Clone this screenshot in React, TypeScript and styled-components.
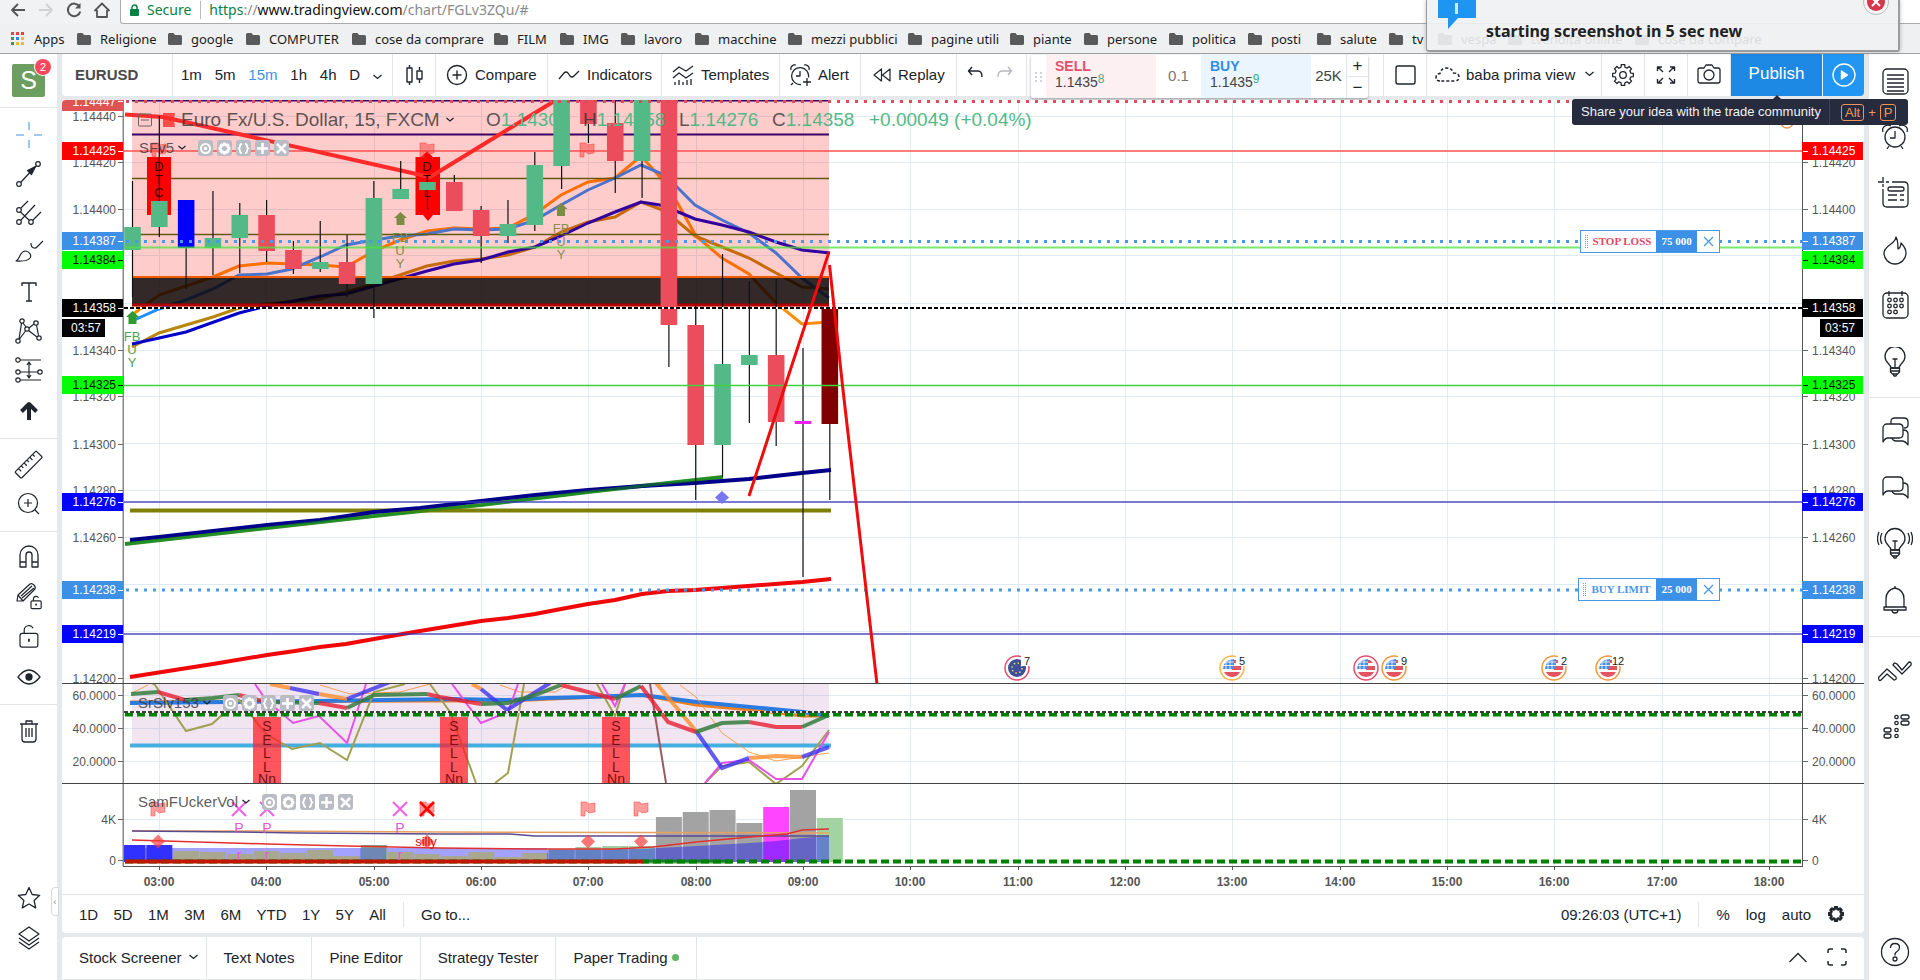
import React from "react";
import styled, { createGlobalStyle, css } from "styled-components";

const SANS = '"Liberation Sans", Arial, sans-serif';
const UI = '"Noto Sans", "Open Sans", sans-serif';
const LINE = "#e1e5ea";
const GAP = "#e6e9ec";

const GlobalStyle = createGlobalStyle`
  *, *::before, *::after { box-sizing: border-box; }
  body { margin: 0; background: ${GAP}; font-family: ${SANS}; color: #20242c; }
  button, input { font: inherit; color: inherit; background: none; border: 0; padding: 0; margin: 0; }
  a { color: inherit; text-decoration: none; }
`;

/* ---------- browser frame ---------- */

const Page = styled.div`
  display: flex;
  flex-direction: column;
  min-height: 100vh;
  position: relative;
  overflow: hidden;
`;
const NavBar = styled.div`
  display: flex;
  height: 24px;
  background: #f1f2f3;
`;
const NavButtons = styled.div`
  display: flex;
  flex: none;
  width: 120px;
  padding-left: 4px;
`;
const NavButton = styled.button`
  width: 28px;
  height: 20px;
  display: grid;
  place-items: center;
`;
const Address = styled.div`
  flex: 1;
  display: flex;
  align-items: center;
  background: #fff;
  border: 1px solid #a9abad;
  border-width: 0 0 1px 1px;
  border-bottom-left-radius: 3px;
  font: 14px/18px ${UI};
  padding: 0 0 4px 8px;
  white-space: pre;
`;
const Secure = styled.span`
  color: #0b8043;
  margin-left: 7px;
  padding-right: 9px;
  margin-right: 8px;
  border-right: 1px solid #bbb;
`;
const Url = styled.a`
  color: #8a8a8a;
  b { font-weight: 400; color: #111; }
  i { font-style: normal; color: #0b8043; }
`;
const Bookmarks = styled.nav`
  display: flex;
  align-items: center;
  height: 30px;
  padding-left: 11px;
  background: #eef0f1;
  border-bottom: 1px solid #a0a2a4;
  white-space: nowrap;
`;
const Bookmark = styled.a<{ $w: number }>`
  flex: none;
  display: flex;
  align-items: center;
  gap: 9px;
  width: ${(p) => p.$w}px;
  font: 13px/18px ${UI};
  color: #1c1c1c;
`;

const Notice = styled.div`
  position: absolute;
  right: 20px;
  top: 0;
  width: 474px;
  height: 52px;
  z-index: 5;
  display: flex;
  align-items: flex-start;
  padding-left: 11px;
  background: rgba(240, 241, 242, 0.9);
  border: 1px solid #9a9c9e;
  border-width: 0 2px 2px 1px;
  border-radius: 0 0 3px 3px;
  box-shadow: 0 0 4px rgba(0, 0, 0, 0.25);
`;
const NoticeText = styled.strong`
  font: 700 16px/20px ${UI};
  margin: 21px 0 0 9px;
  color: #222;
  white-space: nowrap;
`;
const NoticeClose = styled.button`
  position: absolute;
  right: 8px;
  top: -10px;
  width: 28px;
  height: 26px;
`;

/* ---------- application frame ---------- */

const AppBody = styled.div`
  flex: 1;
  display: flex;
  gap: 5px;
`;
const Rail = styled.aside<{ $w: number }>`
  flex: none;
  width: ${(p) => p.$w}px;
  background: #fff;
  display: flex;
  flex-direction: column;
  position: relative;
`;
const RailGroup = styled.div<{ $pad?: string; $h?: number; $btn: number; $top?: boolean; $last?: boolean }>`
  display: flex;
  flex-direction: column;
  align-items: center;
  justify-content: space-between;
  padding: ${(p) => p.$pad || "6px 0 8px"};
  ${(p) => p.$h && css`height: ${p.$h}px;`}
  ${(p) => !p.$top && css`border-top: 1px solid ${LINE};`}
  ${(p) => p.$last && css`margin-top: auto; border-top: 0;`}
  > button { height: ${(p) => p.$btn}px; width: 100%; display: grid; place-items: center; }
`;
const Avatar = styled.button`
  && { width: 33px; height: 33px; background: #6b9e60; color: #fff; font-size: 25px; line-height: 33px; border-radius: 2px; position: relative; display: block; }
`;
const Badge = styled.span`
  position: absolute;
  right: -6px;
  top: -5px;
  width: 16px;
  height: 16px;
  border-radius: 8px;
  background: #f7485e;
  font-size: 11px;
  line-height: 16px;
  box-shadow: 0 0 0 1px #fff;
`;
const RailHandle = styled.button`
  position: absolute;
  right: -2px;
  bottom: 64px;
  width: 8px;
  height: 29px;
  background: #fff;
  border: 1px solid #d5d9de;
  border-radius: 4px 0 0 4px;
  color: #888;
  font-size: 9px;
`;
const Main = styled.main`
  flex: 1;
  min-width: 0;
  display: flex;
  flex-direction: column;
`;

/* ---------- header ---------- */

const Header = styled.header`
  display: flex;
  height: 42px;
  background: #fff;
  font-size: 15px;
  border-radius: 0 0 4px 4px;
`;
const Cell = styled.button<{ $w: number; $pad?: number; $gap?: number }>`
  flex: none;
  width: ${(p) => p.$w}px;
  padding: 0 0 1px ${(p) => p.$pad ?? 11}px;
  border-right: 1px solid ${LINE};
  display: flex;
  align-items: center;
  gap: ${(p) => p.$gap ?? 7}px;
  white-space: nowrap;
`;
const Ticker = styled(Cell)`
  font-weight: 700;
  color: #4a4a4a;
`;
const Push = styled.span`
  margin: 0 7px 0 auto;
  display: flex;
`;
const Intervals = styled.div`
  flex: none;
  width: 220px;
  display: flex;
  align-items: center;
  justify-content: space-between;
  padding: 0 10px 1px 8px;
  border-right: 1px solid ${LINE};
`;
const Interval = styled.button<{ $on?: boolean }>`
  color: ${(p) => (p.$on ? "#3c94e4" : "inherit")};
`;
const HistoryCell = styled.div`
  flex: none;
  width: 70px;
  display: flex;
  align-items: center;
  justify-content: space-between;
  padding: 0 13px 1px 10px;
  border-right: 1px solid ${LINE};
`;
const TradePanel = styled.div`
  flex: none;
  display: flex;
  height: 43px;
  margin: 1px 0 0 4px;
  background: #fff;
  border-radius: 2px;
  box-shadow: 0 1px 3px rgba(0, 0, 0, 0.35);
  font-size: 14px;
`;
const Grip = styled.div`
  width: 15px;
  display: grid;
  place-items: center;
`;
const Quote = styled.button<{ $bg: string; $fg: string }>`
  width: 110px;
  padding-left: 9px;
  text-align: left;
  background: ${(p) => p.$bg};
  line-height: 16px;
  padding-bottom: 5px;
  color: #444;
  b { display: block; color: ${(p) => p.$fg}; font-weight: 700; }
  sup { color: #3fae85; font-size: 12px; line-height: 0; vertical-align: 4px; }
`;
const Spread = styled.div`
  width: 45px;
  text-align: center;
  line-height: 41px;
  font-size: 15px;
  color: #777;
`;
const Quantity = styled.input`
  width: 35px;
  height: 41px;
  text-align: center;
  font-size: 15px;
  color: #444;
`;
const Stepper = styled.div`
  width: 22px;
  border-left: 1px solid ${LINE};
  display: flex;
  flex-direction: column;
  button { flex: 1; font-size: 17px; line-height: 20px; }
  button + button { border-top: 1px solid ${LINE}; }
`;
const HeaderRight = styled.div`
  display: flex;
  margin-left: auto;
  > :first-child { border-left: 1px solid ${LINE}; }
`;
const Publish = styled.button`
  width: 92px;
  padding-bottom: 2px;
  background: #1e88e5;
  color: #fff;
  font-size: 17px;
  border-right: 1px solid #e8f2fc;
`;
const PlayButton = styled.button`
  width: 41px;
  background: #2196f3;
  display: grid;
  place-items: center;
  border-bottom-right-radius: 4px;
`;
const Tip = styled.div`
  position: absolute;
  right: 12px;
  top: 99px;
  z-index: 6;
  height: 26px;
  width: 336px;
  display: flex;
  align-items: center;
  background: #262b3e;
  border-radius: 3px;
  color: #f0f2f6;
  font-size: 13px;
  white-space: nowrap;
  &::before { content: ""; position: absolute; left: 200px; top: -4px; border: 5px solid transparent; border-top: 0; border-bottom-color: #262b3e; }
`;
const TipText = styled.span`
  width: 258px;
  padding-left: 9px;
  line-height: 26px;
  border-right: 1px solid #3c4258;
`;
const Keys = styled.span`
  display: flex;
  align-items: center;
  gap: 4px;
  padding-left: 11px;
  color: #f2935c;
  kbd { font: inherit; line-height: 15px; border: 1px solid #f2935c; border-radius: 3px; padding: 0 3px; }
`;

/* ---------- chart ---------- */

const ChartCard = styled.section`
  flex: 1;
  display: flex;
  flex-direction: column;
  margin-top: 4px;
  background: #fff;
  border-radius: 4px;
  overflow: hidden;
`;
const Pane = styled.div<{ $h?: number }>`
  ${(p) => (p.$h ? css`height: ${p.$h}px; border-top: 1px solid #444;` : css`flex: 1 0 583px;`)}
  display: flex;
  position: relative;
  overflow: hidden;
`;
const AxisSvg = styled.svg`
  flex: none;
  width: 62px;
  height: 100%;
  display: block;
  font: 12px ${SANS};
`;
const PlotSvg = styled.svg`
  flex: 1;
  min-width: 0;
  width: 0;
  height: 100%;
  display: block;
  font: 12px ${SANS};
`;
const TimeRow = styled.div`
  height: 28px;
  padding: 0 61px;
  svg { display: block; width: 100%; height: 28px; overflow: hidden; }
`;
const Legend = styled.div<{ $x: number; $y: number }>`
  position: absolute;
  left: ${(p) => p.$x}px;
  top: ${(p) => p.$y}px;
  display: flex;
  align-items: center;
  white-space: pre;
  line-height: 20px;
  color: rgba(50, 50, 50, 0.8);
`;
const Title = styled.div`
  font-size: 19px;
  display: flex;
  align-items: center;
  gap: 6px;
  width: 305px;
  margin-left: 29px;
`;
const Ohlc = styled.span<{ $w: number }>`
  font-size: 19px;
  width: ${(p) => p.$w}px;
  em { font-style: normal; color: #53b987; }
`;
const StudyName = styled.span`
  font-size: 15px;
  margin-right: 4px;
`;
const StudyTools = styled.span`
  display: flex;
  gap: 4px;
  margin-left: 12px;
`;
const StudyTool = styled.button`
  width: 15px;
  height: 16px;
  border-radius: 3px;
  background: #b9bcc4;
  display: grid;
  place-items: center;
`;
const Order = styled.div<{ $y: number; $w: number; $c: string }>`
  position: absolute;
  right: 144px;
  top: ${(p) => p.$y}px;
  width: ${(p) => p.$w}px;
  height: 23px;
  display: flex;
  align-items: center;
  border: 1px solid #4a98ea;
  background: #fff;
  font: 700 11px/21px "Liberation Serif", serif;
  color: ${(p) => p.$c};
`;
const OrderGrip = styled.span`
  width: 3px;
  height: 13px;
  margin-left: 4px;
  border: dotted #6aa8ea;
  border-width: 0 1px;
`;
const OrderName = styled.span`
  flex: 1;
  text-align: center;
  white-space: nowrap;
`;
const OrderQty = styled.span`
  width: 41px;
  text-align: center;
  color: #fff;
  background: #3c90e6;
`;
const OrderClose = styled.button`
  width: 22px;
  height: 21px;
  display: grid;
  place-items: center;
`;

/* ---------- bottom bars ---------- */

const RangeBar = styled.div`
  height: 39px;
  display: flex;
  align-items: center;
  border-top: 1px solid ${LINE};
  padding-left: 17px;
  font-size: 15px;
`;
const Ranges = styled.div`
  display: flex;
  justify-content: space-between;
  width: 307px;
`;
const Rule = styled.span`
  width: 1px;
  height: 25px;
  background: ${LINE};
  margin: 0 17px;
`;
const Scales = styled.div`
  margin-left: auto;
  display: flex;
  align-items: center;
  padding-right: 19px;
`;
const ScaleButtons = styled.div`
  display: flex;
  align-items: center;
  gap: 16px;
  svg { display: block; }
`;
const Tabs = styled.nav`
  display: flex;
  height: 42px;
  margin: 4px 0 1px;
  background: #fff;
  border-radius: 4px 4px 0 0;
  font-size: 15px;
`;
const Tab = styled.button`
  padding: 0 17px 2px;
  border-right: 1px solid ${LINE};
  display: flex;
  align-items: center;
  gap: 7px;
  white-space: nowrap;
  &:first-child { padding-right: 8px; }
`;
const Dot = styled.i`
  width: 7px;
  height: 7px;
  border-radius: 4px;
  background: #5fb562;
  margin-left: -3px;
`;
const TabsRight = styled.div`
  margin-left: auto;
  display: flex;
  align-items: center;
  gap: 19px;
  padding: 0 16px 2px 0;
  svg { display: block; }
`;

/* ---------- icons ---------- */

const Icon = ({ s = 30, w = 1, c = "#20242c", children }: { s?: number; w?: number; c?: string; children: React.ReactNode }) => (
  <svg width={s} height={s} viewBox={`0 0 ${s} ${s}`} fill="none" stroke={c} strokeWidth={w} strokeLinejoin="round" aria-hidden="true">
    {children}
  </svg>
);
const Chevron = ({ c = "#20242c", up = false, w = 8 }) => (
  <svg width={w} height={w / 2 + 2} viewBox={`0 0 ${w} ${w / 2 + 2}`} fill="none" stroke={c} strokeWidth="1.3" aria-hidden="true">
    <path d={up ? `M.5 ${w / 2 + 1}L${w / 2} 1.5L${w - 0.5} ${w / 2 + 1}` : `M.5 1L${w / 2} ${w / 2}L${w - 0.5} 1`} />
  </svg>
);
const Folder = () => (
  <svg width="14" height="12" viewBox="0 0 14 12" aria-hidden="true">
    <path d="M0 1.5Q0 0 1.5 0H5.5L7 2H12.5Q14 2 14 3.5V10.5Q14 12 12.5 12H1.5Q0 12 0 10.5Z" fill="#5a5a5a" />
  </svg>
);
const gear = (cx: number, cy: number, r: number, n: number, t: number) => {
  const pts: string[] = [];
  for (let i = 0; i < n; i++) {
    const a = (i / n) * Math.PI * 2;
    const k = Math.PI / n;
    [[-0.62, r], [-0.42, r + t], [0.42, r + t], [0.62, r]].forEach(([f, q]) =>
      pts.push(`${(cx + Math.sin(a + f * k) * q).toFixed(2)},${(cy - Math.cos(a + f * k) * q).toFixed(2)}`)
    );
  }
  return pts.join(" ");
};
const LockShape = ({ x, y, k }: { x: number; y: number; k: number }) => (
  <g transform={`translate(${x} ${y}) scale(${k})`} strokeWidth={1.2 / k}>
    <rect x="0" y="8" width="17" height="13" rx="2" />
    <path d="M4 8V5a4.5 4.5 0 0 1 8.5-2" />
    <path d="M8.5 13v3" strokeWidth={1.8 / k} />
  </g>
);

const drawTools: [string, React.ReactNode][] = [
  ["Cross", <Icon c="#7fb9ee" w={1.6}><path d="M15 2v8M15 20v8M2 15h8M20 15h8" /></Icon>],
  ["Trend Line", <Icon w={1.2}><circle cx="5" cy="25" r="2.3" /><circle cx="24" cy="5" r="2.3" /><path d="M7 23L22 7" /><path d="M21.5 7.500l-8 4 4 4z" fill="#20242c" /></Icon>],
  ["Pitchfork", <Icon w={1.2}><circle cx="5" cy="11" r="2.3" /><circle cx="5" cy="23" r="2.3" /><circle cx="17" cy="23" r="2.3" /><path d="M7 9l7-7M7 21L21 6M19 21l8-8M6.5 13L15 21" /></Icon>],
  ["Brush", <Icon w={1.2}><path d="M2 23c4-1 3-9 9-10 4 0 7 4 5 7-3 4-10 3-14 3zM17 6c0 4 4 5 6 3l6-6M17 7V5" /></Icon>],
  ["Text", <Icon w={1.4}><path d="M8 8V5h14v3M15 5v18M12 23h6" /></Icon>],
  ["Patterns", <Icon w={1.2}><circle cx="4" cy="24" r="2.2" /><circle cx="8" cy="4" r="2.2" /><circle cx="13" cy="12" r="2.2" /><circle cx="22" cy="6" r="2.2" /><circle cx="25" cy="21" r="2.2" /><path d="M5 22L7.5 6.200M9 6l3 4M5.500 22l6-8M15 11l5-4M14.500 13.500L23 20M22.500 8l2 10.500" /></Icon>],
  ["Prediction", <Icon w={1.2}><circle cx="4" cy="3" r="2.2" /><circle cx="4" cy="15" r="2.2" /><circle cx="26" cy="15" r="2.2" /><circle cx="4" cy="23" r="2.2" /><path d="M6 3h21M6 15h18M6 23h21M15 6v14M13 8l2-3 2 3M13 18l2 3 2-3" /></Icon>],
  ["Arrow", <Icon w={4}><path d="M15 24V9M7.500 15.500L15 8l7.500 7.500" /></Icon>],
];
const Bulb = () => (
  <g>
    <path d="M11 21c0-4-6-5-6-11.500a10 10 0 0 1 20 0c0 6.500-6 7.500-6 11.500z" />
    <path d="M15 20v-8M12.500 12h5M10.500 21h9v4l-2 2h-5l-2-2zM10.500 24h9M13 27l1 2h2l1-2" />
  </g>
);
const Bubble = ({ dy = 0 }) => (
  <g transform={`translate(0 ${dy})`}>
    <path d="M3 24V11a4 4 0 0 1 4-4h12q4 0 4 4v6q0 4-4 4H8q-3 0-5 4z" />
    <path d="M23 13c3 0 5 1 5 4v11c-2-3-3-4-6-4H16q-3 0-4-3" />
  </g>
);
const panelTools: [string, React.ReactNode][] = [
  ["Watchlist", <Icon w={1.3}><rect x="3" y="2" width="25" height="25" rx="4" /><path d="M7 8h17M7 12h17M7 16h17M7 20h17M7 24h17" /></Icon>],
  ["Alerts", <Icon w={1.3}><circle cx="15" cy="14" r="10" /><path d="M15 8v7h-5M5 3a5 5 0 0 0-2 6M5 3a6 6 0 0 1 6 0M25 3a5 5 0 0 1 2 6M25 3a6 6 0 0 0-6 0M9 23l-2 3M21 23l2 3" /></Icon>],
  ["Data Window", <Icon s={36} w={1.3}><path d="M6 13v14q0 4 4 4h17q4 0 4-4V10q0-4-4-4H15M1 6h6M9 6h3M6 1v4M6 8v3" /><rect x="11" y="11" width="16" height="4" rx="2" /><path d="M11 19h9M23 19h4M11 24h9M23 24h4" /></Icon>],
  ["Hotlist", <Icon w={1.3}><path d="M16 2c0 7-12 8-12 16a11 11 0 0 0 22 0c0-5-3-8-5-10 0 3-1 5-3 6 0-4 0-9-2-12z" /></Icon>],
  ["Calendar", <Icon w={1.3}><rect x="3" y="2" width="25" height="25" rx="4" /><path d="M9 0v5M22 0v5" />{[9, 15, 21].map((x) => [9, 15, 21].map((y) => (x === 21 && y === 21 ? null : <circle key={`${x}-${y}`} cx={x + 0.5} cy={y} r="1.8" />)))}</Icon>],
  ["My Ideas", <Icon w={1.3}><Bulb /></Icon>],
];
const socialTools: [string, React.ReactNode][] = [
  ["Public Chats", <Icon w={1.3}><Bubble /><path d="M11 7V4q0-3 4-3h9q4 0 4 4v3q0 3-4 3" /></Icon>],
  ["Private Chats", <Icon w={1.3}><Bubble dy={-3} /></Icon>],
  ["Idea Stream", <Icon s={36} w={1.3}><g transform="translate(3 3)"><Bulb /><path d="M2 4q-3 6 0 11M-1 3q-3 7 0 13M28 4q3 6 0 11M31 3q3 7 0 13" /></g></Icon>],
  ["Notifications", <Icon w={1.3}><path d="M6 22v-8q0-9 9-11 9 2 9 11v8zM15 3V1M4 22h22v3H4zM12 25q0 3 3 3t3-3" /></Icon>],
];

/* ---------- chart data ---------- */

const bx = (i: number) => 132.5 + 26.82 * i;
const hours = Array.from({ length: 16 }, (_, i) => ({ x: Math.round(159 + 107.33 * i), label: `${String(i + 3).padStart(2, "0")}:00` }));

const G = "#53b987";
const R = "#eb4d5c";
type Candle = [number, number, number, number, string];
const candles: Candle[] = [
  [181, 297, 227, 250, G], [116, 237, 201, 227, G], [200, 289, 200, 248, "#0000ff"], [191, 275, 238, 248, G],
  [203, 273, 215, 238, G], [200, 262, 215, 251, R], [241, 274, 250, 269, R], [221, 272, 262, 269, G],
  [235, 297, 262, 284, R], [181, 318, 198, 284, G], [161, 189, 189, 199, G], [175, 210, 182, 190, G],
  [175, 182, 182, 211, R], [206, 263, 210, 236, R], [200, 243, 224, 236, G], [152, 231, 165, 225, G],
  [100, 189, 100, 166, G], [100, 143, 100, 124, R], [100, 193, 123, 161, R], [100, 198, 100, 161, G],
  [100, 367, 100, 325, R], [306, 500, 325, 445, R], [254, 477, 364, 445, G], [281, 423, 355, 365, G],
  [279, 446, 355, 422, R], [348, 577, 421, 424, "#f020f0"], [308, 500, 308, 424, "#800000"],
];

const series = {
  orange: "132,315 159,295 186,286 213,277 239,266 267,263 320,265 346,267 374,251 400,240 427,231 454,228 481,229 508,228 535,214 561,195 588,182 615,178 641,156 660,177 677,202 696,236 722,258 749,274 776,303 802,324 829,322",
  blue: "132,321 159,309 186,300 213,289 239,275 267,274 292,269 320,257 346,245 374,240 400,236 427,234 454,229 481,230 508,229 535,220 561,205 588,190 615,178 641,165 660,173 676,186 695,205 722,220 749,233 776,253 802,278 829,298",
  gold: "132,347 159,333 213,317 239,308 267,304 320,299 374,284 400,275 427,266 454,261 481,259 508,255 535,247 561,232 588,222 615,217 641,202 660,209 676,220 695,236 722,247 749,258 776,273 802,287 829,289",
  indigo: "132,344 186,332 239,313 267,306 320,296 346,294 374,286 427,271 454,264 481,260 508,252 535,247 561,236 588,223 615,212 641,202 660,205 676,211 695,219 722,225 749,232 776,242 802,250 830,253",
  navy: "130,540 159,537 213,531 267,525 320,520 374,512 420,508 481,501 535,495 588,490 642,486 695,483 722,481 749,479 775,476 802,473 831,470",
  green: "125,544 267,528 374,516 440,509 481,505 588,492 668,483 723,477",
  red: "130,677 213,664 267,655 295,651 320,647 346,644 374,639 420,631 481,621 508,618 535,614 561,609 588,604 615,600 642,594 668,591 695,590 735,587 775,584 802,582 831,579",
};

const gridMain = [117, 163, 210, 256, 304, 351, 397, 444, 491, 538, 585, 632, 679];
const ticksMain: [number, string][] = [
  [117, "1.14440"], [163, "1.14420"], [210, "1.14400"], [351, "1.14340"], [397, "1.14320"],
  [445, "1.14300"], [491, "1.14280"], [538, "1.14260"], [679, "1.14200"],
];
const tags: [number, string, string, string][] = [
  [151, "1.14425", "#ff0000", "#fff"], [241, "1.14387", "#3c90e6", "#fff"], [260, "1.14384", "#00ff00", "#111"],
  [308, "1.14358", "#000", "#fff"], [385, "1.14325", "#00ff00", "#111"], [502, "1.14276", "#0000ff", "#fff"],
  [590, "1.14238", "#3c90e6", "#fff"], [634, "1.14219", "#0000ff", "#fff"],
];

/* Price scale drawn in page rows; `top` is the row where its pane starts. */
const Axis = ({ side, top, ticks, marks = [] }: { side: "l" | "r"; top: number; ticks: [number, string][]; marks?: typeof tags }) => {
  const left = side === "l";
  const tx = left ? 54 : 10;
  const anchor = left ? "end" : "start";
  const line = left ? 61.5 : 0.5;
  const tick = left ? [56, 61] : [1, 6];
  return (
    <AxisSvg>
      <g transform={`translate(0 ${-top})`}>
        <path d={`M${line} ${top}V2000`} stroke={left ? "#888" : "#555"} strokeWidth={left ? 2 : 1} />
        {ticks.map(([y, t]) => (
          <g key={t}>
            <path d={`M${tick[0]} ${y - 0.5}H${tick[1]}`} stroke="#666" />
            <text x={tx} y={y + 4} textAnchor={anchor} fill="#555">{t}</text>
          </g>
        ))}
        {marks.map(([y, t, bg, fg]) => (
          <g key={t}>
            <rect x={0} y={y - 9} width={61} height={18} fill={bg} />
            <path d={`M${tick[0]} ${y + 0.5}H${tick[1]}`} stroke={fg} />
            <text x={tx} y={y + 4} textAnchor={anchor} fill={fg}>{t}</text>
          </g>
        ))}
        {marks.length > 0 && (
          <g>
            <rect x={left ? 0 : 18} y={319} width={43} height={18} fill="#000" />
            <text x={left ? 9 : 23} y={332} fill="#fff">03:57</text>
            {left && (
              <g>
                <rect x="0" y="99" width="61" height="12" fill="#e05353" />
                <path d="M56 101.500H61" stroke="#fff" />
                <text x={tx} y="106" textAnchor="end" fill="#fff">1.14447</text>
              </g>
            )}
          </g>
        )}
      </g>
    </AxisSvg>
  );
};

const VGrid = () => (
  <g stroke="#e1ecf2">{hours.map((h) => <path key={h.x} d={`M${h.x + 0.5} 0V2000`} />)}</g>
);
const HGrid = ({ ys }: { ys: number[] }) => (
  <g stroke="#e1ecf2">{ys.map((y) => <path key={y} d={`M124 ${y - 0.5}H6000`} />)}</g>
);
const Flag = ({ x, y, c = "rgba(255,60,60,.5)" }: { x: number; y: number; c?: string }) => (
  <path d={`M${x - 7} ${y}l6 0 1 2 7-1v9l-6 1-2-2-2 0v5h-4z`} fill={c} stroke="rgba(255,60,60,.5)" />
);
const UpArrow = ({ x, y, c }: { x: number; y: number; c: string }) => (
  <path d={`M${x} ${y}l6.500 6h-2.500v7h-8v-7h-2.500z`} fill={c} />
);
const Letters = ({ x, ys, text, c, size = 13 }: { x: number; ys: number[]; text: string[]; c: string; size?: number }) => (
  <g fill={c} textAnchor="middle" fontSize={size}>
    {text.map((t, i) => <text key={i} x={x} y={ys[i]}>{t}</text>)}
  </g>
);
const EventMark = ({ x, ring, eu, n }: { x: number; ring: string; eu?: boolean; n?: string }) => (
  <g>
    <circle cx={x} cy="668" r="12" fill="#fff" stroke={ring} strokeWidth="1.5" />
    {eu ? (
      <g>
        <circle cx={x} cy="668" r="9" fill="#3d4f9f" />
        <circle cx={x} cy="668" r="5" fill="none" stroke="#f5d94e" strokeWidth="1.5" strokeDasharray="1.5 2.43" />
      </g>
    ) : (
      <g>
        <path d={`M${x - 8} 672h16a9 9 0 0 1-16 0z`} fill="#e4535f" />
        <path d={`M${x} 660h4l3 3h-7zM${x} 666h9v4h-9z`} fill="#e4535f" />
        <path d={`M${x + 2} 659v10h-11q0-9 11-10z`} fill="#4a8ee0" />
        <path d={`M${x - 6} 660v9M${x - 2} 660v9M${x - 9} 665.500h11M${x - 7} 662h9`} stroke="#fff" strokeWidth=".8" />
      </g>
    )}
    {n && (
      <g>
        <rect x={x + 4} y="655" width={n.length * 7 + 3} height="11" fill="#fff" />
        <text x={x + (n.length > 1 ? 4 : 7)} y="665" fontSize="11" fill="#222">{n}</text>
      </g>
    )}
  </g>
);

const MainPlot = () => (
  <PlotSvg role="img" aria-label="EURUSD 15 minute candles">
    <g transform="translate(-124 -100)" fill="none">
      <VGrid />
      <HGrid ys={gridMain} />
      <polyline points={series.orange} stroke="#ff8c00" strokeWidth="3" />
      <polyline points={series.gold} stroke="#b8860b" strokeWidth="3" />
      <polyline points={series.blue} stroke="#1e90ff" strokeWidth="3" />
      <polyline points={series.indigo} stroke="#0000c8" strokeWidth="3" />
      <path d="M132 178.500H829M132 234.500H829" stroke="#3a7008" strokeWidth="1.500" />
      <path d="M132 100.500H829M132 134.500H829" stroke="#0b0080" strokeWidth="2" />
      <rect x="132" y="100" width="697" height="207" fill="rgba(255,0,0,.2)" />
      <rect x="132" y="278" width="697" height="26" fill="rgba(0,0,0,.8)" />
      <path d="M132 277H829" stroke="#f05a00" strokeWidth="2" />
      <path d="M132 305H829" stroke="#b00000" strokeWidth="3" />
      <path d="M124 151H6000" stroke="#ff5050" strokeWidth="1.500" />
      <rect x="147" y="157" width="24" height="58" fill="#ff0000" />
      <path d="M415.500 157h24.500v58h-7l-5 6-5-6h-7.500zM421 157l6-6 6 6z" fill="#ff0000" />
      <Flag x={159} y={143} />
      <Flag x={427} y={143} />
      <Flag x={587} y={143} />
      <path d="M163 113h12l-1 7 1 7h-12z" fill="#ff4b4b" />
      <path d="M125 114.500L163 117L430 177L556 100" stroke="#ff2a2a" strokeWidth="4" />
      <Letters x={159} ys={[171, 184, 197]} text={["D", "T", "C"]} c="#400" />
      <Letters x={427} ys={[171, 184, 197]} text={["D", "T", "L"]} c="#400" />
      <polyline points={series.green} stroke="#3a943a" strokeWidth="4" />
      <path d="M130 510.500H831" stroke="#808000" strokeWidth="4" />
      <polyline points={series.navy} stroke="#00008b" strokeWidth="4" />
      <polyline points={series.green} stroke="rgba(20,140,20,.6)" strokeWidth="3" />
      <polyline points={series.red} stroke="#f00808" strokeWidth="4" />
      {candles.map(([hi, lo, a, b, c], i) => (
        <g key={i}>
          <path d={`M${bx(i)} ${hi}V${lo}`} stroke="#111" strokeWidth="1.2" />
          <rect x={bx(i) - 8.3} y={a} width="16.6" height={b - a} fill={c} />
        </g>
      ))}
      <path d="M124 247.500H6000" stroke="rgba(80,225,60,.75)" strokeWidth="2" />
      <path d="M124 385.500H6000" stroke="#3fd23f" strokeWidth="1.500" />
      <path d="M124 502H6000M124 634H6000" stroke="rgba(50,50,190,.65)" strokeWidth="2" />
      <path d="M126 241.500H6000M126 590H6000" stroke="#4a98ea" strokeWidth="3" strokeDasharray="3 6" />
      <path d="M126 101.500H6000" stroke="#e04a5c" strokeWidth="3" strokeDasharray="3 6" />
      <path d="M124 308H6000" stroke="#fff" strokeWidth="2" />
      <path d="M124 308H6000" stroke="#000" strokeWidth="2" strokeDasharray="4 2" />
      <UpArrow x={132.5} y={311} c="#2f9a2f" />
      <UpArrow x={400.5} y={212} c="#7d8c45" />
      <UpArrow x={561} y={203} c="#7d8c45" />
      <Letters x={132} ys={[341, 354, 367]} text={["FB", "U", "Y"]} c="#55a055" />
      <Letters x={400} ys={[242, 255, 268]} text={["FB", "U", "Y"]} c="#7f8c50" />
      <Letters x={561} ys={[233, 246, 259]} text={["FB", "U", "Y"]} c="#8f8c50" />
      <path d="M722 491l7 6.500-7 6.500-7-6.500z" fill="#7777f2" />
      <path d="M749 496L829 252M829.500 265L843 390L877 684" stroke="#ee0c0c" strokeWidth="3" />
      <circle cx="1787" cy="122" r="6" stroke="#f2935c" strokeWidth="1.5" />
      <EventMark x={1017} ring="#e4506a" eu n="7" />
      <EventMark x={1232} ring="#f2b84a" n="5" />
      <EventMark x={1366} ring="#e4506a" />
      <EventMark x={1394} ring="#f09a3e" n="9" />
      <EventMark x={1554} ring="#f09a3e" n="2" />
      <EventMark x={1608} ring="#f09a3e" n="12" />
    </g>
  </PlotSvg>
);

const L = ({ p, c, w = 4 }: { p: string; c: string; w?: number }) => <polyline points={p} stroke={c} strokeWidth={w} />;
const RD = "rgba(230,30,50,.8)";
const GR = "rgba(50,125,60,.85)";
const OR = "rgba(255,140,40,.8)";
const BL = "rgba(60,50,240,.8)";
const OL = "#a0a050";
const MG = "#e850e8";

const OscillatorPlot = () => (
  <PlotSvg role="img" aria-label="SrSlv153 oscillator">
    <g transform="translate(-124 -684)" fill="none">
      <VGrid />
      <HGrid ys={[696, 729, 762]} />
      <rect x="132" y="684" width="697" height="61" fill="rgba(128,0,128,.1)" />
      <path d="M130 745.500H831" stroke="#45aede" strokeWidth="4" />
      <L p="130,702 450,701 530,700 600,697 642,695 696,705 750,710 803,716 829,716" c="#f08020" w={3} />
      <L p="130,703 317,701 450,699 507,700 547,698 588,697 642,695 697,702 750,707 803,712 829,716" c="#2b7be0" />
      <L p="132,693 148,685" c={OR} w={1} />
      <L p="320,685 350,694 400,692 430,684" c={OR} w={1} />
      <L p="500,685 520,692 555,692 570,684" c={OR} w={1} />
      <L p="680,685 696,697 722,733 749,752 776,761 829,753" c={OR} w={1} />
      <L p="140,675 155,685 186,731 212,724 239,700 266,734 292,749 320,743 347,760 374,692 405,684" c={OL} w={2} />
      <L p="430,684 450,712 476,783" c={OL} w={2} />
      <L p="495,783 508,773 524,684" c={OL} w={2} />
      <L p="597,684 615,716 625,684" c={OL} w={2} />
      <L p="650,684 666,783" c="#9a5a62" w={2} />
      <L p="705,783 722,766 749,762 776,784 802,766 829,730" c={OL} w={2} />
      <L p="255,684 266,700 293,723 319,716 347,743 366,684" c={MG} w={2} />
      <L p="452,684 481,723 508,712 518,684" c={MG} w={2} />
      <L p="602,684 615,706 625,684" c={MG} w={2} />
      <L p="705,783 722,763 749,760 776,779 802,779 829,732" c={MG} w={2} />
      <L p="270,684 290,688" c={OR} />
      <L p="290,688 319,694" c={BL} />
      <L p="319,694 347,699" c={OR} />
      <L p="347,699 390,682" c={BL} />
      <L p="472,684 481,689" c={OR} />
      <L p="481,689 507,710 550,683" c={BL} />
      <L p="656,683 696,731" c={OR} />
      <L p="696,731 722,768 749,758" c={BL} />
      <L p="749,758 776,756 802,757" c={OR} />
      <L p="802,757 829,747" c={BL} />
      <L p="131,694 158,692" c={GR} />
      <L p="158,692 185,700" c={RD} />
      <L p="185,700 213,698 239,695" c={GR} />
      <L p="239,695 266,702" c={RD} />
      <L p="266,702 319,703" c={GR} />
      <L p="319,703 347,708" c={RD} />
      <L p="347,708 374,695 427,694" c={GR} />
      <L p="427,694 440,697 481,704" c={RD} />
      <L p="481,704 508,703 535,695 561,685" c={GR} />
      <L p="561,685 615,699" c={RD} />
      <L p="615,699 641,686" c={GR} />
      <L p="641,686 668,722 696,732" c={RD} />
      <L p="696,732 722,723 749,722" c={GR} />
      <L p="749,722 776,727 802,727" c={RD} />
      <L p="802,727 829,715" c={GR} />
      <path d="M125 714.500H6000" stroke="#008000" strokeWidth="4" strokeDasharray="8 4" />
      <path d="M124 712H6000" stroke="#fff" strokeWidth="1.500" />
      <path d="M124 712H6000" stroke="#000" strokeWidth="1.500" strokeDasharray="4 2" />
      {[253, 440, 602].map((x) => (
        <g key={x}>
          <rect x={x} y="717" width="28" height="66" fill="rgba(255,30,40,.75)" />
          <Letters x={x + 14} ys={[731, 745, 758, 772, 784]} text={["S", "E", "L", "L", "Nn"]} c="#7a1010" size={14} />
        </g>
      ))}
    </g>
  </PlotSvg>
);

const volumes: [number, string][] = [
  [845, "#3030ff"], [845, "#3030ff"], [851, "#a8a890"], [852, "#a8a890"], [854, "#a8a890"], [851, "#a8a890"], [853, "#a8a890"],
  [850, "#a8a890"], [856, "#a8a890"], [845, "#84a896"], [852, "#a8a890"], [854, "#a8a890"], [856, "#a8a890"], [852, "#a8a890"],
  [857, "#a8a890"], [853, "#a8a890"], [849, "#a0d0a0"], [847, "#a0d0a0"], [846, "#a0d0a0"], [846, "#a0d0a0"], [817, "#a3a3a3"],
  [812, "#a3a3a3"], [810, "#a3a3a3"], [823, "#a3a3a3"], [807, "#ff45ff"], [790, "#a3a3a3"], [818, "#a3d3a3"],
];

const VolumePlot = () => (
  <PlotSvg role="img" aria-label="Volume">
    <g transform="translate(-124 -784)" fill="none">
      <VGrid />
      <HGrid ys={[820, 861]} />
      <path d="M125 848H547V862H125z" fill="#a3a3ff" />
      {volumes.map(([y, c], i) => <rect key={i} x={bx(i) - 13} y={y} width="26" height={862 - y} fill={c} />)}
      <path d="M547 850L640 849L696 846L750 843L776 841L802 838L829 836V862H547z" fill="rgba(0,0,255,.38)" />
      <path d="M360 848H386V862H360z" fill="rgba(60,60,255,.3)" />
      <L p="132,831 240,831 440,832 829,833" c="#e8a060" w={1.5} />
      <L p="132,831 240,832 300,833 440,834 510,834 535,836 829,836" c="#5a4a90" w={1.5} />
      <L p="132,840 267,844 347,846 440,848 535,849 615,849 653,847 696,842 750,837 787,834 802,830 829,829" c="#e03030" w={1.5} />
      <path d="M125 861.500H6000" stroke="#008000" strokeWidth="4" strokeDasharray="8 4" />
      <path d="M125 861.500H643" stroke="#c01800" strokeWidth="4" />
      <path d="M643 861.500H732" stroke="rgba(0,128,0,.7)" strokeWidth="4" />
      {[158, 427, 588, 641].map((x) => (
        <g key={x}>
          <Flag x={x} y={802} />
          <path d={`M${x} 834.500l7 7-7 7-7-7z`} fill="rgba(255,60,60,.7)" />
        </g>
      ))}
      {[239, 267, 400].map((x) => (
        <g key={x}>
          <path d={`M${x - 7} 802l14 14M${x + 7} 802l-14 14`} stroke="#f060e8" strokeWidth="2" />
          <Letters x={x} ys={[833, 860]} text={["P", "r"]} c="#e058d8" size={14} />
        </g>
      ))}
      <path d="M420 802l14 14M434 802l-14 14" stroke="#f00" strokeWidth="2.500" />
      <text x="426" y="846" fontSize="13" fill="#e01010" textAnchor="middle">silly</text>
    </g>
  </PlotSvg>
);

const Study = ({ name, x, y }: { name: string; x: number; y: number }) => (
  <Legend $x={x} $y={y}>
    <StudyName>{name}</StudyName>
    <Chevron />
    <StudyTools>
      <StudyTool aria-label="Hide"><Icon s={13} w={2} c="#fff"><circle cx="6.5" cy="6.5" r="4.5" /><circle cx="6.5" cy="6.5" r=".8" /></Icon></StudyTool>
      <StudyTool aria-label="Format"><Icon s={13} w={2} c="#fff"><polygon points={gear(6.5, 6.5, 3.5, 8, 1.5)} /></Icon></StudyTool>
      <StudyTool aria-label="Source code"><Icon s={13} w={1.8} c="#fff"><path d="M5 2q-2 0-2 2t-1.500 2.500Q3 7 3 9t2 2M8 2q2 0 2 2t1.500 2.500Q10 7 10 9t-2 2" /></Icon></StudyTool>
      <StudyTool aria-label="Add"><Icon s={13} w={2.5} c="#fff"><path d="M6.500 1v11M1 6.500h11" /></Icon></StudyTool>
      <StudyTool aria-label="Delete"><Icon s={13} w={2.5} c="#fff"><path d="M2 2l9 9M11 2l-9 9" /></Icon></StudyTool>
    </StudyTools>
  </Legend>
);

const OrderLabel = ({ name, qty, y, w, c }: { name: string; qty: string; y: number; w: number; c: string }) => (
  <Order $y={y} $w={w} $c={c}>
    <OrderGrip />
    <OrderName>{name}</OrderName>
    <OrderQty>{qty}</OrderQty>
    <OrderClose aria-label={`Cancel ${name}`}><Icon s={11} w={1.3} c="#4a98ea"><path d="M1 1l9 9M10 1l-9 9" /></Icon></OrderClose>
  </Order>
);

const bookmarks: [string, number][] = [
  ["Religione", 91], ["google", 78], ["COMPUTER", 106], ["cose da comprare", 142], ["FILM", 66], ["IMG", 61], ["lavoro", 74],
  ["macchine", 93], ["mezzi pubblici", 120], ["pagine utili", 102], ["piante", 74], ["persone", 85], ["politica", 79],
  ["posti", 69], ["salute", 72], ["tv", 49], ["vespa", 70], ["tvendita online", 127], ["cose da compare", 130],
];

export default function App() {
  return (
    <Page>
      <GlobalStyle />
      <NavBar>
        <NavButtons>
          <NavButton aria-label="Back"><Icon s={20} w={1.8} c="#555"><path d="M17 10H4M10 4l-6 6 6 6" /></Icon></NavButton>
          <NavButton aria-label="Forward"><Icon s={20} w={1.8} c="#d2d2d2"><path d="M3 10h13M10 4l6 6-6 6" /></Icon></NavButton>
          <NavButton aria-label="Reload"><Icon s={20} w={2} c="#555"><path d="M15.500 6.500a6.300 6.300 0 1 0 .8 5" /><path d="M16.500 3v5.500H11z" fill="#555" stroke="none" /></Icon></NavButton>
          <NavButton aria-label="Home"><Icon s={20} w={1.8} c="#555"><path d="M2.500 11L10 3.500l7.500 7.500M5 10v7h10v-7" /></Icon></NavButton>
        </NavButtons>
        <Address>
          <svg width="11" height="12" viewBox="0 0 11 12" aria-hidden="true"><rect x="1" y="5" width="9" height="7" rx="1" fill="#0b8043" /><path d="M3 5V3.500a2.500 2.500 0 0 1 5 0V5" fill="none" stroke="#0b8043" strokeWidth="1.5" /></svg>
          <Secure>Secure</Secure>
          <Url href="#"><i>https</i>://<b>www.tradingview.com</b>/chart/FGLv3ZQu/#</Url>
        </Address>
      </NavBar>
      <Bookmarks aria-label="Bookmarks">
        <Bookmark href="#" $w={66}>
          <svg width="14" height="13" viewBox="0 0 14 13" aria-hidden="true">
            {["#e8453c", "#e8453c", "#e8453c", "#2f9e4f", "#3c7de8", "#f2b632", "#2f9e4f", "#f2b632", "#f2b632"].map((c, i) => (
              <rect key={i} x={(i % 3) * 5} y={Math.floor(i / 3) * 5} width="3" height="3" fill={c} />
            ))}
          </svg>
          Apps
        </Bookmark>
        {bookmarks.map(([t, w]) => <Bookmark key={t} href="#" $w={w}><Folder />{t}</Bookmark>)}
      </Bookmarks>

      <Notice role="status">
        <svg width="39" height="30" viewBox="0 0 39 30" aria-hidden="true">
          <path d="M0 0H38V18H20L10 29V18H0Z" fill="#1e95f0" /><rect x="17" y="3" width="3" height="11" fill="#cfe8fc" />
        </svg>
        <NoticeText>starting screenshot in 5 sec new</NoticeText>
        <NoticeClose aria-label="Close"><Icon s={28} c="#bbb"><circle cx="14" cy="12" r="12.5" fill="#f6f6f6" /><circle cx="14" cy="12" r="9" fill="#d8364a" stroke="none" /><path d="M10 8l8 8M18 8l-8 8" stroke="#fff" strokeWidth="2" /></Icon></NoticeClose>
      </Notice>
      <Tip role="tooltip">
        <TipText>Share your idea with the trade community</TipText>
        <Keys><kbd>Alt</kbd>+<kbd>P</kbd></Keys>
      </Tip>

      <AppBody>
        <Rail $w={57}>
          <RailGroup $btn={33} $h={53} $pad="10px 0" $top><Avatar>S<Badge>2</Badge></Avatar></RailGroup>
          <RailGroup $btn={38} $h={331} $pad="8px 0">
            {drawTools.map(([n, i]) => <button key={n} aria-label={n}>{i}</button>)}
          </RailGroup>
          <RailGroup $btn={39}>
            <button aria-label="Measure"><Icon w={1.2}><g transform="rotate(-45 15 15)"><rect x="0" y="10" width="30" height="9" rx="1" /><path d="M5 10v4M9 10v3M13 10v4M17 10v3M21 10v4M25 10v3" /></g></Icon></button>
            <button aria-label="Zoom In"><Icon w={1.2}><circle cx="14" cy="14" r="9.5" /><path d="M14 10v8M10 14h8M21 21l4 4" /></Icon></button>
          </RailGroup>
          <RailGroup $btn={40} $pad="5px 0 7px">
            <button aria-label="Magnet"><Icon w={1.3}><path d="M6 25V13a9 9 0 0 1 18 0v12h-6V13a3 3 0 0 0-6 0v12zM6 20h6M18 20h6" /></Icon></button>
            <button aria-label="Stay in Drawing Mode"><Icon w={1.2}><path d="M3 19l1-6L16 2q2-1 4 1t1 4L9 19zM4 13l5 6M7 14L18 4M8 16L20 6" /><LockShape x={17} y={14} k={0.6} /></Icon></button>
            <button aria-label="Lock All Drawings"><Icon><LockShape x={6} y={3} k={1.05} /></Icon></button>
            <button aria-label="Hide Drawings"><Icon w={1.3}><path d="M4 15q11-14 22 0q-11 14-22 0z" /><circle cx="15" cy="15" r="3" fill="#20242c" /></Icon></button>
          </RailGroup>
          <RailGroup $btn={40}>
            <button aria-label="Remove"><Icon w={1.3}><path d="M6 8h18M12 8V5h6v3M8 8v15q0 3 3 3h8q3 0 3-3V8M12 12v9M15 12v9M18 12v9" /></Icon></button>
          </RailGroup>
          <RailGroup $btn={40} $last $pad="0 0 22px">
            <button aria-label="Favorites"><Icon w={1.3}><path d="M15 4.500l3.200 7 7.500.8-5.600 5.100 1.600 7.500-6.700-3.900-6.700 3.900 1.600-7.500-5.600-5.100 7.500-.8z" /></Icon></button>
            <button aria-label="Object Tree"><Icon w={1.3}><path d="M15 4l10 7-10 7-10-7zM5 15l10 7 10-7M5 19l10 7 10-7" /></Icon></button>
          </RailGroup>
          <RailHandle aria-label="Collapse toolbar">‹</RailHandle>
        </Rail>

        <Main>
          <Header>
            <Ticker $w={111} $pad={13}>EURUSD</Ticker>
            <Intervals>
              {["1m", "5m", "15m", "1h", "4h", "D"].map((t) => <Interval key={t} $on={t === "15m"}>{t}</Interval>)}
              <button aria-label="More intervals"><Chevron w={9} /></button>
            </Intervals>
            <Cell $w={43} $pad={10} aria-label="Candles"><Icon s={22} w={1.4}><path d="M6.500 1v3M6.500 18v3M16.500 3v3M16.500 15v4" /><rect x="4" y="4" width="5" height="14" /><rect x="14" y="7" width="5" height="8" /></Icon></Cell>
            <Cell $w={112} $pad={10}><Icon s={22} w={1.4}><circle cx="11" cy="11" r="9.5" /><path d="M11 6.500v9M6.500 11h9" /></Icon>Compare</Cell>
            <Cell $w={114} $pad={10}><Icon s={22} w={1.3}><path d="M1 15l5-6q2-2 4 0l2 3q2 2 4 0l5-5" /></Icon>Indicators</Cell>
            <Cell $w={118} $pad={10}><Icon s={22} w={1.3}><path d="M1 8l6-5 7 4 7-5M1 14l6-5 7 5 7-5M3 21v-3M7 21v-5M11 21v-3M15 21v-5M19 21v-6" /></Icon>Templates</Cell>
            <Cell $w={81} $pad={9}><Icon s={22} w={1.3}><path d="M12 20.500a8.500 8.500 0 1 1 7.500-7M11 7v5H7M2 6a4 4 0 0 1 5-5M20 6a4 4 0 0 0-5-5M4 19l-2 2M18 14v8M14 18h8" /></Icon>Alert</Cell>
            <Cell $w={96} $pad={12}><Icon s={18} w={1.2}><path d="M8.500 3v12L1 9zM17 3v12L9.500 9z" /></Icon>Replay</Cell>
            <HistoryCell>
              <button aria-label="Undo"><Icon s={16} w={1.4}><path d="M5 2L1.500 6 5 10M2 6h9q4 0 4 6" /></Icon></button>
              <button aria-label="Redo"><Icon s={16} w={1.4} c="#b5b8bd"><path d="M11 2l3.500 4L11 10M14 6H5q-4 0-4 6" /></Icon></button>
            </HistoryCell>
            <TradePanel>
              <Grip><Icon s={10} w={2} c="#cfd2d6"><path d="M2 0v10M7 0v10" strokeDasharray="2 2" /></Icon></Grip>
              <Quote $bg="#fdf0f3" $fg="#e4506a"><b>SELL</b>1.1435<sup>8</sup></Quote>
              <Spread>0.1</Spread>
              <Quote $bg="#ebf5fd" $fg="#2f8fe4"><b>BUY</b>1.1435<sup>9</sup></Quote>
              <Quantity aria-label="Quantity" defaultValue="25K" />
              <Stepper><button aria-label="More">+</button><button aria-label="Less">−</button></Stepper>
            </TradePanel>
            <HeaderRight>
              <Cell $w={44} $pad={10} aria-label="Select layout"><Icon s={22} w={1.4}><rect x="2" y="2" width="19" height="18" rx="2" /></Icon></Cell>
              <Cell $w={175} $pad={7} $gap={5}><Icon s={27} w={1.5}><path d="M6 20q-4 0-4-3.500t4-4q1-5.500 6.500-5.500t7 5q5.500 0 5.500 4t-4.500 4z" strokeDasharray="3 2" /></Icon>baba prima view<Push><Chevron w={9} /></Push></Cell>
              <Cell $w={43} $pad={10} aria-label="Settings"><Icon s={22} w={1.3}><polygon points={gear(11, 11, 8, 8, 2.5)} /><circle cx="11" cy="11" r="3.3" /></Icon></Cell>
              <Cell $w={43} $pad={11} aria-label="Fullscreen"><Icon s={20} w={1.4}><path d="M1.500 6V2H6M2 2l5 5M14 2h4.500v4M18 2l-5 5M1.500 14v4H6M2 18l5-5M14 18h4.500v-4M18 18l-5-5" /></Icon></Cell>
              <Cell $w={43} $pad={9} aria-label="Snapshot"><Icon s={24} w={1.3}><path d="M1 7q0-2 2-2h4l2-3h6l2 3h4q2 0 2 2v11q0 2-2 2H3q-2 0-2-2z" /><circle cx="12" cy="12" r="5" /></Icon></Cell>
              <Publish>Publish</Publish>
              <PlayButton aria-label="Start streaming"><Icon s={24} w={1.4} c="#fff"><circle cx="12" cy="12" r="11" /><path d="M9.500 8v8l6-4z" fill="#fff" /></Icon></PlayButton>
            </HeaderRight>
          </Header>

          <ChartCard>
            <Pane>
              <Axis side="l" top={100} ticks={ticksMain} marks={tags} />
              <MainPlot />
              <Axis side="r" top={100} ticks={ticksMain} marks={tags} />
              <Legend $x={76} $y={10}>
                <Icon s={14} c="#666"><rect x=".5" y="1" width="13" height="12" rx="1" /><path d="M3 7h8" /></Icon>
                <Title>Euro Fx/U.S. Dollar, 15, FXCM<Chevron /></Title>
                <Ohlc $w={97}>O<em>1.14309</em></Ohlc>
                <Ohlc $w={96}>H<em>1.14358</em></Ohlc>
                <Ohlc $w={93}>L<em>1.14276</em></Ohlc>
                <Ohlc $w={97}>C<em>1.14358</em></Ohlc>
                <Ohlc $w={170}><em>+0.00049 (+0.04%)</em></Ohlc>
              </Legend>
              <Study name="SFv5" x={77} y={38} />
              <OrderLabel name="STOP LOSS" qty="75 000" y={130} w={140} c="#e04a5c" />
              <OrderLabel name="BUY LIMIT" qty="25 000" y={478} w={142} c="#4a98ea" />
            </Pane>
            <Pane $h={100}>
              <Axis side="l" top={684} ticks={[[696, "60.0000"], [729, "40.0000"], [762, "20.0000"]]} />
              <OscillatorPlot />
              <Axis side="r" top={684} ticks={[[696, "60.0000"], [729, "40.0000"], [762, "20.0000"]]} />
              <Study name="SrSlv153" x={76} y={9} />
            </Pane>
            <Pane $h={83}>
              <Axis side="l" top={784} ticks={[[820, "4K"], [861, "0"]]} />
              <VolumePlot />
              <Axis side="r" top={784} ticks={[[820, "4K"], [861, "0"]]} />
              <Study name="SamFUckerVol" x={76} y={8} />
            </Pane>
            <TimeRow>
              <svg fontFamily={SANS} fontSize="12" fontWeight="700" fill="#555" textAnchor="middle">
                <path d="M0 .5H6000" stroke="#555" />
                {hours.map((h) => (
                  <g key={h.label}>
                    <path d={`M${h.x - 122.5} 0V4`} stroke="#555" />
                    <text x={h.x - 123} y="20">{h.label}</text>
                  </g>
                ))}
              </svg>
            </TimeRow>
            <RangeBar>
              <Ranges>{["1D", "5D", "1M", "3M", "6M", "YTD", "1Y", "5Y", "All"].map((t) => <button key={t}>{t}</button>)}</Ranges>
              <Rule />
              <button>Go to...</button>
              <Scales>
                <button>09:26:03 (UTC+1)</button>
                <Rule />
                <ScaleButtons>
                  <button>%</button><button>log</button><button>auto</button>
                  <button aria-label="Scale settings"><Icon s={18} w={2.2}><polygon points={gear(9, 9, 5, 8, 2)} /></Icon></button>
                </ScaleButtons>
              </Scales>
            </RangeBar>
          </ChartCard>
          <Tabs>
            <Tab>Stock Screener <Chevron w={9} /></Tab>
            <Tab>Text Notes</Tab>
            <Tab>Pine Editor</Tab>
            <Tab>Strategy Tester</Tab>
            <Tab>Paper Trading<Dot /></Tab>
            <TabsRight>
              <button aria-label="Open panel"><Chevron up w={18} /></button>
              <button aria-label="Maximize panel"><Icon s={22} w={1.5}><path d="M2 7V5q0-2 2-2h3M15 3h3q2 0 2 2v2M2 15v2q0 2 2 2h3M15 19h3q2 0 2-2v-2" /></Icon></button>
            </TabsRight>
          </Tabs>
        </Main>

        <Rail $w={51}>
          <RailGroup $btn={56} $top $pad="0 0 7px">{panelTools.map(([n, i]) => <button key={n} aria-label={n}>{i}</button>)}</RailGroup>
          <RailGroup $btn={56}>{socialTools.map(([n, i]) => <button key={n} aria-label={n}>{i}</button>)}</RailGroup>
          <RailGroup $btn={56}>
            <button aria-label="Order Panel"><Icon s={36} w={1.3}><path d="M2 27q-1-2 0-3l8-8 9 8q1 3-2 3l-7-6-6 6q-1 1-2 0zM16 12q1-3 4-1l5 6 7-8q3 0 2 3l-9 9z" /></Icon></button>
            <button aria-label="Depth of Market"><Icon w={1.3}><rect x="4" y="16" width="7" height="4" rx="2" /><rect x="4" y="22" width="7" height="4" rx="2" /><rect x="21" y="3" width="8" height="4" rx="2" /><rect x="21" y="9" width="8" height="4" rx="2" />{[5, 11, 18, 24].map((y) => <circle key={y} cx="16.5" cy={y} r="1.7" />)}</Icon></button>
          </RailGroup>
          <RailGroup $btn={56} $last $pad="0"><button aria-label="Help"><Icon w={1.3}><circle cx="15" cy="15" r="13.5" /><path d="M10.500 11q0-4.500 4.500-4.500t4.500 4q0 2.500-2.500 4t-2 4" /><circle cx="15" cy="22" r="2" /></Icon></button></RailGroup>
        </Rail>
      </AppBody>
    </Page>
  );
}
